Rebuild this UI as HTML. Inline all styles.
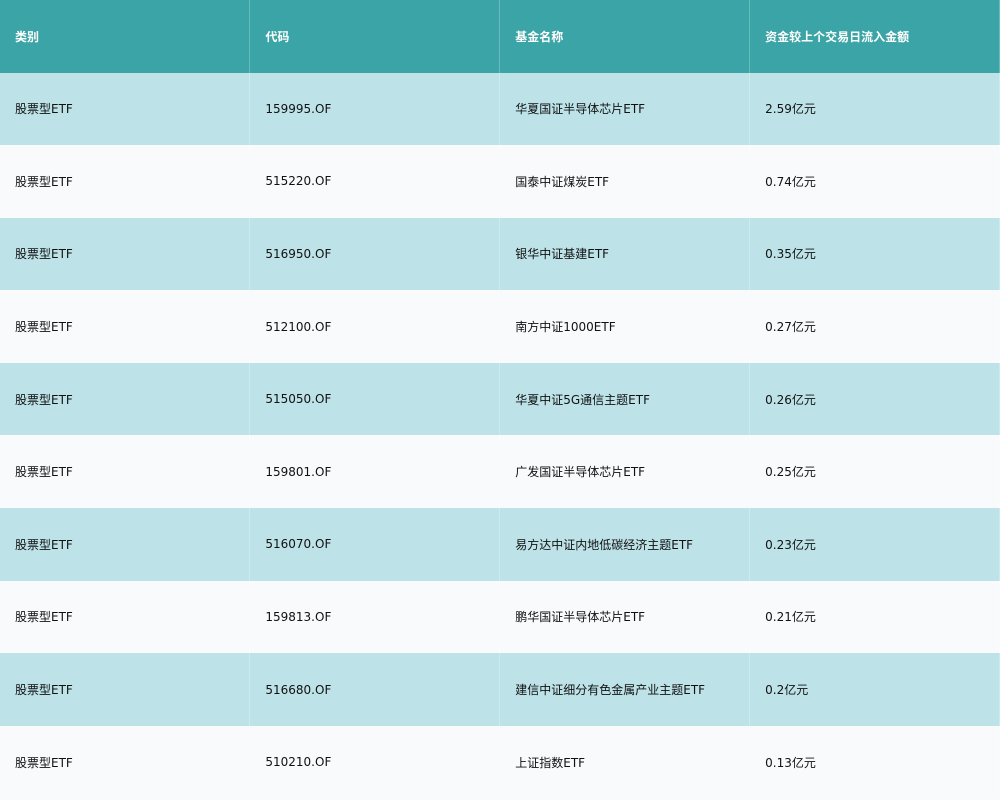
<!DOCTYPE html>
<html><head><meta charset="utf-8"><style>
*{margin:0;padding:0;box-sizing:border-box}
body{width:1000px;height:800px;overflow:hidden;background:#f8fafc;font-family:"DejaVu Sans","Noto Sans CJK SC",sans-serif;font-size:12px;color:#111}
table{border-collapse:collapse;width:1000px;table-layout:fixed}
td,th{height:72.6px;padding:0 15px;text-align:left;vertical-align:middle;border-right:1px solid rgba(255,255,255,0.25)}
th{background:#3ba4a6;color:#fff;font-weight:bold;height:72.5px}
tr:nth-child(even) td{background:#bde3e9}
tr:nth-child(odd) td{background:#f8fafc}
</style></head><body>
<table>
<tr><th>类别</th><th>代码</th><th>基金名称</th><th>资金较上个交易日流入金额</th></tr>
<tr><td>股票型ETF</td><td>159995.OF</td><td>华夏国证半导体芯片ETF</td><td>2.59亿元</td></tr>
<tr><td>股票型ETF</td><td>515220.OF</td><td>国泰中证煤炭ETF</td><td>0.74亿元</td></tr>
<tr><td>股票型ETF</td><td>516950.OF</td><td>银华中证基建ETF</td><td>0.35亿元</td></tr>
<tr><td>股票型ETF</td><td>512100.OF</td><td>南方中证1000ETF</td><td>0.27亿元</td></tr>
<tr><td>股票型ETF</td><td>515050.OF</td><td>华夏中证5G通信主题ETF</td><td>0.26亿元</td></tr>
<tr><td>股票型ETF</td><td>159801.OF</td><td>广发国证半导体芯片ETF</td><td>0.25亿元</td></tr>
<tr><td>股票型ETF</td><td>516070.OF</td><td>易方达中证内地低碳经济主题ETF</td><td>0.23亿元</td></tr>
<tr><td>股票型ETF</td><td>159813.OF</td><td>鹏华国证半导体芯片ETF</td><td>0.21亿元</td></tr>
<tr><td>股票型ETF</td><td>516680.OF</td><td>建信中证细分有色金属产业主题ETF</td><td>0.2亿元</td></tr>
<tr><td>股票型ETF</td><td>510210.OF</td><td>上证指数ETF</td><td>0.13亿元</td></tr>
</table>
</body></html>
